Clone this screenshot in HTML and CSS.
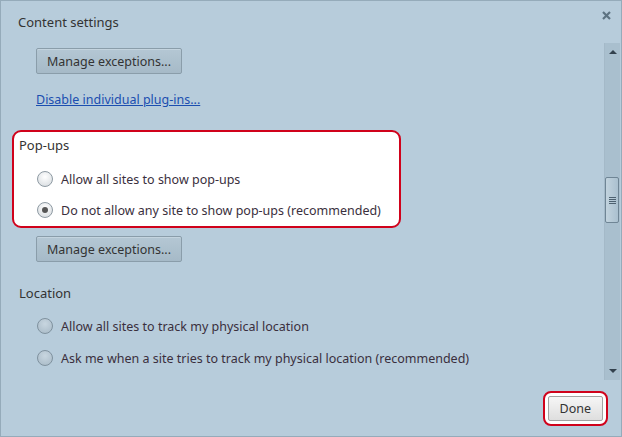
FILE: index.html
```html
<!DOCTYPE html>
<html lang="en">
<head>
    <meta charset="UTF-8">
    <title>Content settings</title>
    <link rel="stylesheet" href="styles.css">
</head>
<body>
    <div class="dialog">
        <div class="dialog-header">
            <h1>Content settings</h1>
            <svg class="close-btn" width="9" height="9" viewBox="0 0 9 9">
                <path d="M1 1 L8 8 M8 1 L1 8" stroke="#5d7382" stroke-width="2.2"/>
            </svg>
        </div>
        <div class="dialog-body">
            <div class="settings">
                <div class="block">
                    <button class="btn">Manage exceptions...</button>
                </div>
                <div class="block link-row">
                    <a href="#">Disable individual plug-ins...</a>
                </div>

                <div class="section highlight">
                    <h2>Pop-ups</h2>
                    <label class="radio-row"><span class="radio"></span>Allow all sites to show pop-ups</label>
                    <label class="radio-row"><span class="radio checked"></span>Do not allow any site to show pop-ups (recommended)</label>
                </div>
                <div class="block after-box">
                    <button class="btn">Manage exceptions...</button>
                </div>

                <div class="section">
                    <h2>Location</h2>
                    <label class="radio-row"><span class="radio"></span>Allow all sites to track my physical location</label>
                    <label class="radio-row"><span class="radio"></span>Ask me when a site tries to track my physical location (recommended)</label>
                </div>
            </div>
            <div class="scrollbar">
                <span class="arrow up"></span>
                <div class="track">
                    <div class="thumb"><span></span><span></span><span></span><span></span></div>
                </div>
                <span class="arrow down"></span>
            </div>
        </div>
        <div class="dialog-footer">
            <div class="done-ring">
                <button class="btn done">Done</button>
            </div>
        </div>
    </div>
</body>
</html>
```

FILE: styles.css
```css
html, body {
    margin: 0;
    padding: 0;
    width: 622px;
    height: 437px;
    overflow: hidden;
}

body {
    font-family: "Segoe UI", "Noto Sans", sans-serif;
    font-size: 12.5px;
    color: #333;
}

.dialog {
    width: 622px;
    height: 437px;
    box-sizing: border-box;
    background: #b7ccdb;
    border: 1px solid #95abba;
    display: flex;
    flex-direction: column;
}

.dialog-header {
    height: 42px;
    display: flex;
    justify-content: space-between;
    align-items: flex-start;
    padding: 0 10px 0 17px;
    flex-shrink: 0;
}

h1 {
    font-size: 13px;
    font-weight: 400;
    margin: 12px 0 0;
    color: #333;
}

.close-btn {
    margin-top: 10px;
}

.dialog-body {
    display: flex;
    height: 337px;
    flex-shrink: 0;
}

.settings {
    flex: 1;
    overflow: hidden;
    padding: 5px 0 0 11px;
}

.block {
    padding-left: 24px;
}

.btn {
    font-family: inherit;
    font-size: 12.5px;
    color: #333;
    height: 26px;
    padding: 0 10px;
    border: 1px solid #8a9daa;
    border-radius: 2px;
    background: linear-gradient(#b4c7d4, #a6bac8);
    box-shadow: inset 0 1px 0 #c4d4df;
}

.link-row {
    margin-top: 18px;
    height: 16px;
    line-height: 16px;
}

.link-row a {
    color: #1b4eb0;
}

.after-box {
    margin-top: 8px;
}

.section {
    margin-top: 23px;
}

.section.highlight {
    width: 389px;
    box-sizing: border-box;
    background: #fff;
    border: 2px solid #d0021b;
    border-radius: 9px;
    padding: 5px 0 4px 5px;
    margin-top: 22px;
}

h2 {
    font-size: 13px;
    line-height: 16px;
    font-weight: 400;
    margin: 0 0 13px 7px;
    color: #333;
}

.highlight h2 {
    margin: 0 0 14px 0;
}

.radio-row {
    display: flex;
    align-items: center;
    gap: 8px;
    height: 24px;
    margin-left: 25px;
    margin-bottom: 8px;
    color: #3a2f3d;
}

.highlight .radio-row {
    margin-left: 18px;
    margin-bottom: 7px;
}

.radio-row:last-child {
    margin-bottom: 0;
}

.radio {
    width: 14px;
    height: 14px;
    border-radius: 50%;
    border: 1px solid #8e9aa3;
    background: radial-gradient(circle at 50% 35%, #ffffff, #d4d9dd);
    display: flex;
    align-items: center;
    justify-content: center;
}

.section:not(.highlight) .radio {
    background: radial-gradient(circle at 50% 35%, #c8d6e0, #a7b9c6);
    border-color: #7f919e;
}

.radio.checked::after {
    content: "";
    width: 6px;
    height: 6px;
    border-radius: 50%;
    background: #555;
}

.scrollbar {
    width: 15px;
    margin-right: 1px;
    background: #a9bfce;
    border-left: 1px solid #a4b9c8;
    display: flex;
    flex-direction: column;
    align-items: center;
}

.arrow {
    width: 0;
    height: 0;
    border-left: 4px solid transparent;
    border-right: 4px solid transparent;
    margin: 7px 0;
}

.arrow.up {
    border-bottom: 4px solid #33414d;
}

.arrow.down {
    border-top: 4px solid #33414d;
}

.track {
    flex: 1;
    width: 100%;
    padding-top: 116px;
    box-sizing: border-box;
}

.thumb {
    width: 14px;
    height: 46px;
    box-sizing: border-box;
    border: 1px solid #6f8595;
    border-radius: 2px;
    background: linear-gradient(90deg, #c2d3de, #aac0cf);
    display: flex;
    flex-direction: column;
    align-items: center;
    justify-content: center;
    gap: 1px;
}

.thumb span {
    width: 7px;
    height: 1px;
    background: #4d6170;
}

.dialog-footer {
    flex: 1;
    display: flex;
    justify-content: flex-end;
    align-items: flex-start;
    padding: 11px 13px 0 0;
}

.done-ring {
    border: 2px solid #d0021b;
    border-radius: 8px;
    padding: 3px;
    background: #fff;
}

.btn.done {
    height: 25px;
    padding: 0 11px;
    border-color: #a3a3a3;
    background: linear-gradient(#f6f6f6, #dedede);
    box-shadow: none;
}
```
